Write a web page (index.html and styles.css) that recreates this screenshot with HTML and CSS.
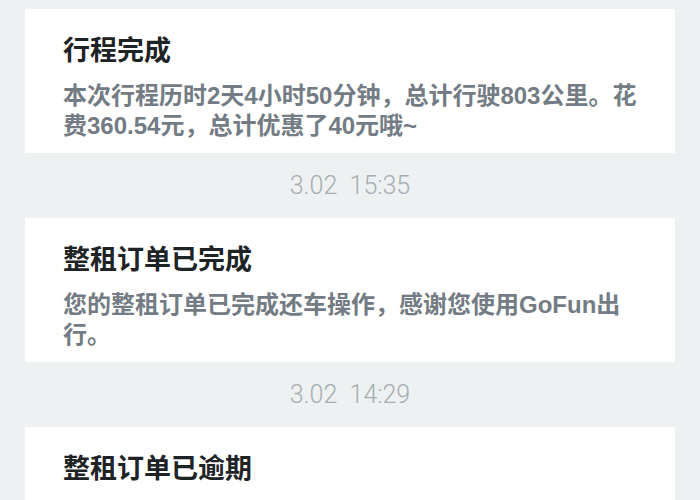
FILE: index.html
```html
<!DOCTYPE html>
<html lang="zh-CN">
<head>
<meta charset="utf-8">
<title>消息</title>
<link rel="stylesheet" href="styles.css">
</head>
<body>
<div class="list">
  <div class="card">
    <div class="title">行程完成</div>
    <div class="text">本次行程历时2天4小时50分钟，总计行驶803公里。花费360.54元，总计优惠了40元哦~</div>
  </div>
  <div class="time">3.02&nbsp;&nbsp;15:35</div>
  <div class="card">
    <div class="title">整租订单已完成</div>
    <div class="text">您的整租订单已完成还车操作，感谢您使用GoFun出行。</div>
  </div>
  <div class="time">3.02&nbsp;&nbsp;14:29</div>
  <div class="card">
    <div class="title">整租订单已逾期</div>
    <div class="text">您的整租订单已逾期，请尽快还车，逾期将产生额外费用。</div>
  </div>
</div>
</body>
</html>
```
FILE: styles.css
```css
html, body {
  margin: 0;
  padding: 0;
  background: #eef1f1;
  overflow: hidden;
}
.list {
  padding: 9px 25px 0;
  display: flex;
  flex-direction: column;
  font-family: "Liberation Sans", "Noto Sans CJK SC", sans-serif;
}
.card {
  background: #ffffff;
  padding: 22px 38px 12px;
}
.title {
  font-size: 27px;
  line-height: 40px;
  font-weight: 700;
  color: #1e2326;
}
.text {
  margin-top: 10px;
  font-size: 24px;
  line-height: 30px;
  font-weight: 600;
  color: #737c84;
}
.time {
  height: 65px;
  display: flex;
  align-items: center;
  justify-content: center;
  font-family: Roboto, "Liberation Sans", sans-serif;
  font-weight: 300;
  font-size: 25px;
  color: #a5adb4;
}
```
